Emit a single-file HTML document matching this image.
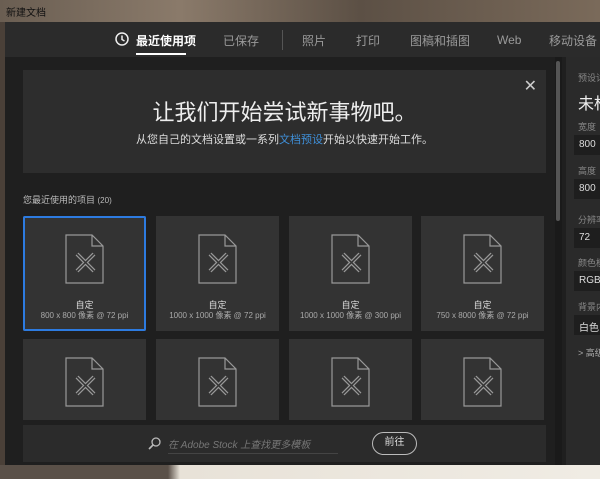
<!DOCTYPE html>
<html><head><meta charset="utf-8"><style>
*{margin:0;padding:0;box-sizing:border-box}
body{width:600px;height:479px;overflow:hidden;background:#4a4038;font-family:"Liberation Sans","Noto Sans CJK SC",sans-serif;position:relative}
.title{position:absolute;left:0;top:0;width:600px;height:22px;background:linear-gradient(90deg,#6a5e52,#8a7a6a 30%,#5c5045 60%,#7a6a5a);color:#111;font-size:10px;padding:4px 6px}
.frame{position:absolute;left:5px;top:22px;width:595px;height:443px;background:#1f1f1f}
.nav{position:absolute;left:5px;top:22px;width:595px;height:35px;background:#2b2b2b;color:#9a9a9a;font-size:12px}
.nav span{position:absolute;top:10px}
.hero{position:absolute;left:23px;top:70px;width:523px;height:103px;background:#2d2d2d;text-align:center;color:#eee}
.card{position:absolute;width:123px;height:115px;background:#333}
.card .t{position:absolute;top:82px;width:100%;text-align:center;color:#ddd;font-size:9px}
.card .s{position:absolute;top:94px;width:100%;text-align:center;color:#aaa;font-size:8px}
.card svg{position:absolute;left:42px;top:18px}
.rp{position:absolute;left:566px;top:57px;width:34px;height:408px;background:#2a2a2a;color:#888;font-size:9px;overflow:hidden;white-space:nowrap}
.rp .b{position:absolute;left:8px;width:40px;height:20px;background:#1e1e1e;color:#ddd;font-size:10px;padding:4px 5px}
.rp .l{position:absolute;left:12px}
</style></head><body>
<div class="title">新建文档</div>
<div class="frame"></div>
<div class="nav">
<svg style="position:absolute;left:110px;top:10px" width="14" height="14" viewBox="0 0 14 14"><circle cx="7" cy="7" r="6" fill="none" stroke="#eee" stroke-width="1.5"/><path d="M7 3.5V7.5L9.5 9" fill="none" stroke="#eee" stroke-width="1.5"/></svg>
<span style="left:131px;color:#fff;font-weight:bold">最近使用项</span>
<div style="position:absolute;left:131px;top:31px;width:50px;height:2px;background:#fff"></div>
<span style="left:218px">已保存</span>
<div style="position:absolute;left:277px;top:8px;width:1px;height:20px;background:#555"></div>
<span style="left:297px">照片</span>
<span style="left:351px">打印</span>
<span style="left:405px">图稿和插图</span>
<span style="left:492px;top:11px">Web</span>
<span style="left:544px">移动设备</span>
</div>
<div class="hero">
<div style="position:absolute;right:9px;top:6px;font-size:16px;color:#ccc">✕</div>
<div style="margin-top:25px;font-size:22px;">让我们开始尝试新事物吧。</div>
<div style="margin-top:4px;font-size:11px;color:#ddd">从您自己的文档设置或一系列<span style="color:#3f8fd8">文档预设</span>开始以快速开始工作。</div>
</div>
<div style="position:absolute;left:23px;top:193px;color:#bbb;font-size:9px">您最近使用的项目 <span style="font-size:8px">(20)</span></div>
<div id="cards"></div>
<script>
const xs=[23,156,289,421],L=[["800 x 800 像素 @ 72 ppi"],["1000 x 1000 像素 @ 72 ppi"],["1000 x 1000 像素 @ 300 ppi"],["750 x 8000 像素 @ 72 ppi"]];
const icon='<svg width="40" height="50" viewBox="0 0 40 50"><path d="M1 1H27L38 12V49H1Z M27 1V12H38" fill="none" stroke="#999" stroke-width="1.2"/><path d="M12 20L29 37M29 20L12 37" stroke="#999" stroke-width="4" fill="none"/><path d="M12 20L29 37M29 20L12 37" stroke="#333" stroke-width="1.5" fill="none"/></svg>';
let h='';
xs.forEach((x,i)=>{h+=`<div class="card" style="left:${x}px;top:216px">${icon}<div class="t">自定</div><div class="s">${L[i]}</div></div>`;
h+=`<div class="card" style="left:${x}px;top:339px;height:81px">${icon}</div>`});
document.getElementById('cards').innerHTML=h;
</script>
<div style="position:absolute;left:23px;top:216px;width:123px;height:115px;border:2px solid #2d7be0;border-radius:2px"></div>
<div style="position:absolute;left:23px;top:425px;width:523px;height:37px;background:#2b2b2b">
<svg style="position:absolute;left:125px;top:12px" width="13" height="13" viewBox="0 0 13 13"><circle cx="8" cy="5" r="4" fill="none" stroke="#bbb" stroke-width="1.3"/><path d="M5 8L1 12" stroke="#bbb" stroke-width="1.6"/></svg>
<div style="position:absolute;left:145px;top:11px;color:#777;font-size:10px;font-style:italic;width:170px;border-bottom:1px solid #444;padding-bottom:2px">在 Adobe Stock 上查找更多模板</div>
<div style="position:absolute;left:349px;top:7px;width:45px;height:23px;border:1.5px solid #bbb;border-radius:12px;color:#ddd;font-size:10px;text-align:center;line-height:20px">前往</div>
</div>
<div style="position:absolute;left:555px;top:57px;width:7px;height:408px;background:#1a1a1a"><div style="position:absolute;left:1px;top:4px;width:4px;height:160px;background:#555;border-radius:2px"></div></div>
<div class="rp">
<div class="l" style="top:14px">预设详细</div>
<div class="l" style="top:33px;font-size:16px;color:#eee">未标题</div>
<div class="l" style="top:63px">宽度</div><div class="b" style="top:78px">800</div>
<div class="l" style="top:107px">高度</div><div class="b" style="top:122px">800</div>
<div class="l" style="top:156px">分辨率</div><div class="b" style="top:171px">72</div>
<div class="l" style="top:199px">颜色模式</div><div class="b" style="top:214px">RGB</div>
<div class="l" style="top:243px">背景内容</div><div class="b" style="top:258px">白色</div>
<div class="l" style="top:289px;color:#aaa">&gt; 高级</div>
</div>
<div style="position:absolute;left:0;top:465px;width:600px;height:14px;background:linear-gradient(90deg,#5a5048 0 28%,#e8e2d8 30%,#f0ece4)"></div>
</body></html>
